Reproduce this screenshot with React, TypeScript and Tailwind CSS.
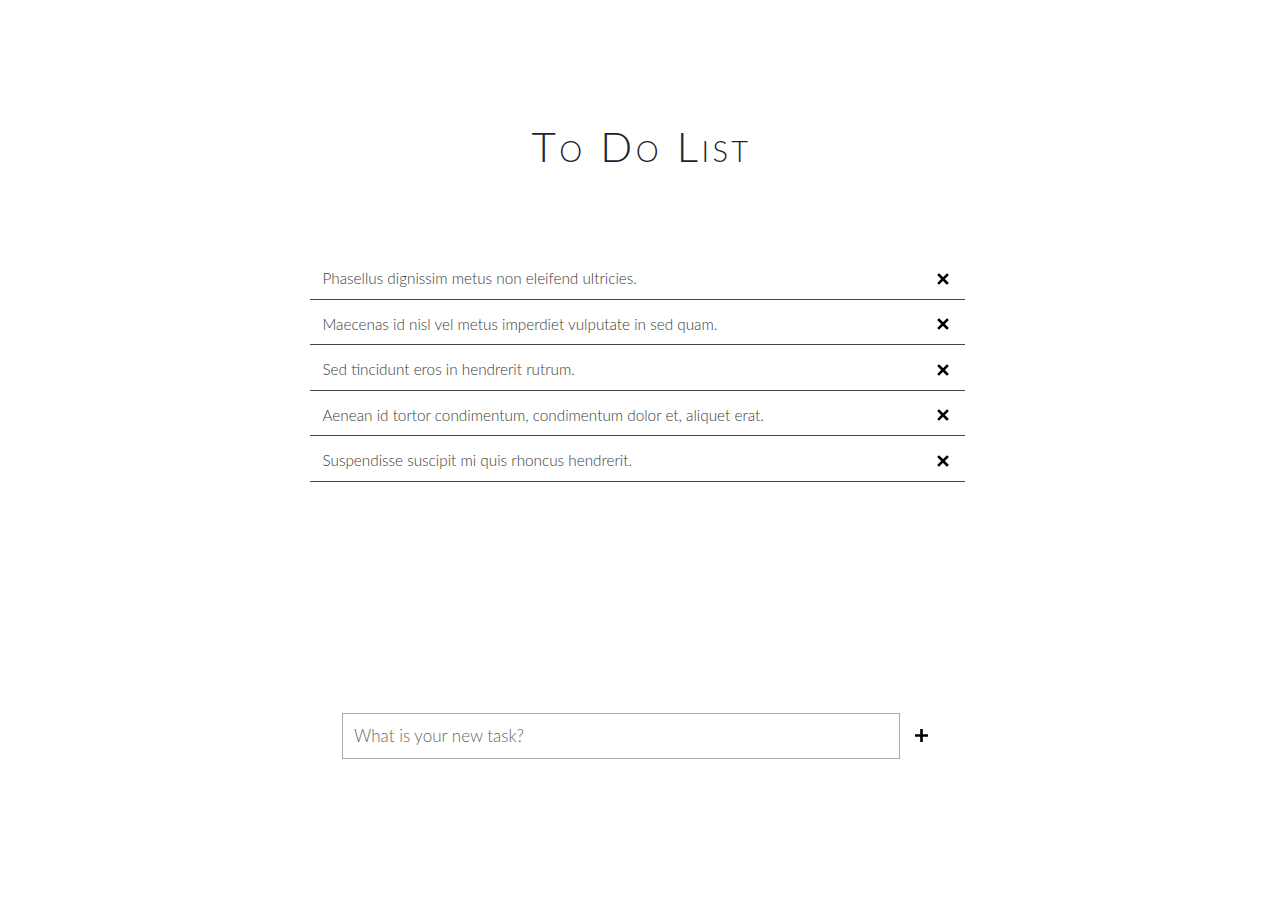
import React, { useState } from 'react';

const TASKS = [
  'Phasellus dignissim metus non eleifend ultricies.',
  'Maecenas id nisl vel metus imperdiet vulputate in sed quam.',
  'Sed tincidunt eros in hendrerit rutrum.',
  'Aenean id tortor condimentum, condimentum dolor et, aliquet erat.',
  'Suspendisse suscipit mi quis rhoncus hendrerit.',
];

const CrossIcon = () => (
  <svg width="12" height="12" viewBox="0 0 12 12" aria-hidden="true">
    <path d="M2 2 L10 10 M10 2 L2 10" stroke="#000" strokeWidth="2.6" strokeLinecap="square" />
  </svg>
);

const PlusIcon = () => (
  <svg width="15" height="15" viewBox="0 0 15 15" aria-hidden="true">
    <path d="M7.5 1 V14 M1 7.5 H14" stroke="#000" strokeWidth="2.6" />
  </svg>
);

export default function App() {
  const [tasks, setTasks] = useState(TASKS);
  const [draft, setDraft] = useState('');

  const addTask = () => {
    if (!draft.trim()) return;
    setTasks([...tasks, draft.trim()]);
    setDraft('');
  };

  return (
    <div className="min-h-[913px] w-full bg-white flex flex-col items-center">
      {/* Title */}
      <h1
        className="mt-[118px] pl-[3px] text-[42px] leading-[56px] font-light text-[#1c2230] tracking-[3.4px] [font-variant:small-caps]"
        style={{ fontFamily: 'Lato, "Open Sans", sans-serif' }}
      >
        To Do List
      </h1>

      {/* Task list */}
      <ul className="mt-[80px] w-[655px] mr-[6px]">
        {tasks.map((task, i) => (
          <li
            key={i}
            className="h-[45.5px] flex items-center justify-between border-b border-[#444] pt-[5px] pl-[13px] pr-[16px]"
          >
            <span
              className="text-[15.3px] font-light text-[#3a3a3a]"
              style={{ fontFamily: 'Lato, "Open Sans", sans-serif' }}
            >
              {task}
            </span>
            <button
              className="w-[12px] h-[12px] flex items-center justify-center"
              onClick={() => setTasks(tasks.filter((_, j) => j !== i))}
            >
              <CrossIcon />
            </button>
          </li>
        ))}
      </ul>

      {/* New task */}
      <div className="mt-[231px] flex items-center w-[598px] ml-[2px]">
        <input
          autoFocus
          value={draft}
          onChange={(e) => setDraft(e.target.value)}
          onKeyDown={(e) => e.key === 'Enter' && addTask()}
          placeholder="What is your new task?"
          className="w-[558px] h-[46px] border border-[#aaa] px-[11px] text-[17px] text-[#333] placeholder:text-[#666] outline-none"
          style={{ fontFamily: 'Lato, "Open Sans", sans-serif', fontWeight: 300 }}
        />
        <button className="ml-[14px] flex items-center justify-center w-[15px] h-[15px]" onClick={addTask}>
          <PlusIcon />
        </button>
      </div>
    </div>
  );
}
